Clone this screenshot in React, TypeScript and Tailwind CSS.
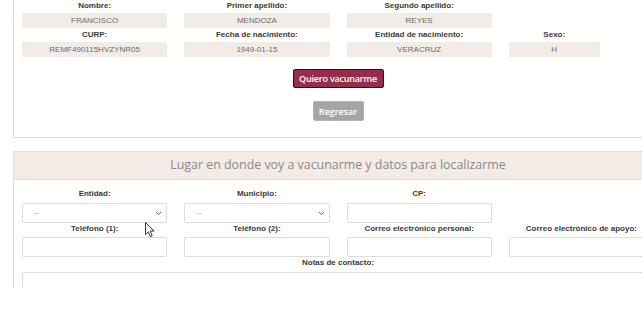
import React from "react";

const Label = ({ children, className = "" }: { children: React.ReactNode; className?: string }) => (
  <div className={`h-[13px] leading-[12px] text-center text-[8px] font-bold text-[#3a3a3a] ${className}`}>{children}</div>
);

const Value = ({ children }: { children: React.ReactNode }) => (
  <div className="h-[15px] leading-[15px] bg-[#f3ece6] text-center text-[8px] text-[#6b6b6b] uppercase">{children}</div>
);

const Field = ({ label, value, narrow }: { label: string; value: string; narrow?: boolean }) => (
  <div className={narrow ? "w-[91px]" : ""}>
    <Label>{label}</Label>
    <Value>{value}</Value>
  </div>
);

const Select = () => (
  <div className="h-[20px] border border-[#dcdcdc] rounded-[2px] bg-white flex items-center justify-between pl-[11px] pr-[4px]">
    <span className="text-[8px] text-[#999]">--</span>
    <svg width="7" height="5" viewBox="0 0 7 5" className="text-[#666]">
      <path d="M1 1 L3.5 3.5 L6 1" fill="none" stroke="currentColor" strokeWidth="1" />
    </svg>
  </div>
);

const Input = () => <div className="h-[20px] border border-[#dcdcdc] rounded-[2px] bg-white" />;

export default function App() {
  return (
    <div className="w-[642px] h-[309px] bg-white overflow-hidden relative" style={{ fontFamily: '"Liberation Sans", Arial, sans-serif' }}>
      <div className="h-[288px] overflow-hidden">
        {/* Panel 1 */}
        <div className="ml-[13px] w-[650px] border-l border-r border-b border-[#dedede] px-[8px] pb-[16px]">
          <div className="grid grid-cols-4 gap-x-[17px] gap-y-[1px]">
            <Field label="Nombre:" value="FRANCISCO" />
            <Field label="Primer apellido:" value="MENDOZA" />
            <Field label="Segundo apellido:" value="REYES" />
            <div />
            <Field label="CURP:" value="REMF490115HVZYNR05" />
            <Field label="Fecha de nacimiento:" value="1949-01-15" />
            <Field label="Entidad de nacimiento:" value="VERACRUZ" />
            <Field label="Sexo:" value="H" narrow />
          </div>
          <div className="flex flex-col items-center mt-[12px]">
            <button
              className="h-[19px] w-[91px] bg-[#952d4b] border border-[#2a1218] rounded-[2px] text-white text-[9px] font-semibold leading-none tracking-[-0.2px]"
              style={{ fontFamily: '"Open Sans", sans-serif' }}
            >
              Quiero vacunarme
            </button>
            <button
              className="mt-[13px] h-[20px] w-[51px] bg-[#a5a5a5] border border-[#b3b3b3] rounded-[2px] text-white text-[9px] font-semibold leading-none"
              style={{ fontFamily: '"Open Sans", sans-serif' }}
            >
              Regresar
            </button>
          </div>
        </div>

        {/* Panel 2 */}
        <div className="mt-[13px] ml-[13px] w-[650px] border border-[#dedede]">
          <div
            className="h-[28px] bg-[#f3ebe5] border-b border-[#e6dcd4] flex items-center justify-center text-[12.4px] text-[#8a8a8a]"
            style={{ fontFamily: '"Open Sans", sans-serif' }}
          >
            Lugar en donde voy a vacunarme y datos para localizarme
          </div>
          <div className="px-[8px] pt-[8px]">
            <div className="grid grid-cols-4 gap-x-[17px]">
              <div>
                <Label>Entidad:</Label>
                <div className="mt-[2px]"><Select /></div>
              </div>
              <div>
                <Label>Municipio:</Label>
                <div className="mt-[2px]"><Select /></div>
              </div>
              <div>
                <Label>CP:</Label>
                <div className="mt-[2px]"><Input /></div>
              </div>
              <div />
              <div>
                <Label className="h-[14px]">Teléfono (1):</Label>
                <Input />
              </div>
              <div>
                <Label className="h-[14px]">Teléfono (2):</Label>
                <Input />
              </div>
              <div>
                <Label className="h-[14px]">Correo electrónico personal:</Label>
                <Input />
              </div>
              <div>
                <Label className="h-[14px]">Correo electrónico de apoyo:</Label>
                <Input />
              </div>
            </div>
            <Label>Notas de contacto:</Label>
            <div className="mt-[2px] h-[40px] border border-[#dcdcdc] rounded-[2px]" />
          </div>
        </div>
      </div>

      {/* mouse cursor */}
      <svg className="absolute left-[145px] top-[222px]" width="11" height="16" viewBox="0 0 11 16">
        <path d="M0.5 0.5 L0.5 12.5 L3.3 9.8 L5.3 14.6 L7.2 13.8 L5.2 9.1 L9.2 9.1 Z" fill="white" stroke="#222" strokeWidth="0.9" strokeLinejoin="round" />
      </svg>
    </div>
  );
}
